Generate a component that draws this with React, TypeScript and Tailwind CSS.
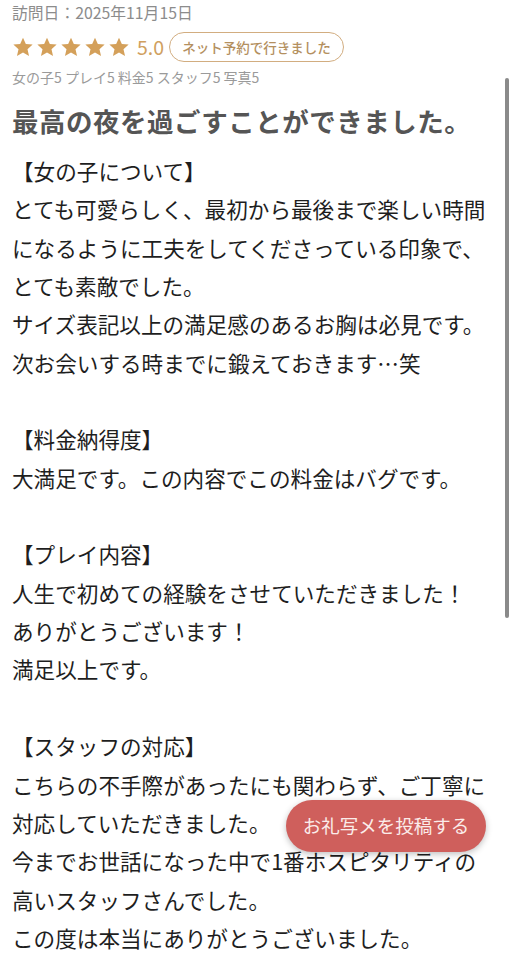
import React from "react";

const lines = [
  "【女の子について】",
  "とても可愛らしく、最初から最後まで楽しい時間",
  "になるように工夫をしてくださっている印象で、",
  "とても素敵でした。",
  "サイズ表記以上の満足感のあるお胸は必見です。",
  "次お会いする時までに鍛えておきます…笑",
  "",
  "【料金納得度】",
  "大満足です。この内容でこの料金はバグです。",
  "",
  "【プレイ内容】",
  "人生で初めての経験をさせていただきました！",
  "ありがとうございます！",
  "満足以上です。",
  "",
  "【スタッフの対応】",
  "こちらの不手際があったにも関わらず、ご丁寧に",
  "対応していただきました。",
  "今までお世話になった中で1番ホスピタリティの",
  "高いスタッフさんでした。",
  "この度は本当にありがとうございました。",
];

function Star() {
  return (
    <svg width="22" height="22" viewBox="0 0 24 24" className="shrink-0">
      <path
        d="M12 1.8l3.1 6.9 7.4.7-5.6 5 1.7 7.4L12 17.9l-6.6 3.9 1.7-7.4-5.6-5 7.4-.7z"
        fill="#d4a05a"
      />
    </svg>
  );
}

export default function App() {
  return (
    <div className="relative w-[513px] h-[960px] overflow-hidden bg-white font-['Noto_Sans_CJK_JP','Noto_Sans',sans-serif]">
      <div className="px-[12px]">
        <div className="pt-[2px] text-[15.8px] leading-[22px] text-[#8c8c8c]">
          訪問日：2025年11月15日
        </div>
        <div className="mt-[8px] flex items-center h-[30px]">
          <div className="flex gap-[2px]">
            <Star />
            <Star />
            <Star />
            <Star />
            <Star />
          </div>
          <span className="ml-[7px] text-[19.5px] leading-none text-[#d0a060]">5.0</span>
          <span className="ml-[5px] flex h-[30px] w-[175px] items-center justify-center rounded-full border-[1.5px] border-[#d2ad80] text-[13.5px] font-medium text-[#b4905f]">
            ネット予約で行きました
          </span>
        </div>
        <div className="mt-[4px] text-[14px] leading-[22px] text-[#9a9a9a]">
          女の子5 プレイ5 料金5 スタッフ5 写真5
        </div>
        <div className="mt-[15px] text-[26.5px] font-bold leading-[36px] tracking-[0.5px] text-[#555]">
          最高の夜を過ごすことができました。
        </div>
        <div className="mt-[13px] text-[21.6px] leading-[38.35px] text-[#1e1e1e]">
          {lines.map((l, i) => (
            <div key={i} className="whitespace-nowrap">
              {l === "" ? "\u00a0" : l}
            </div>
          ))}
        </div>
      </div>
      <div className="absolute left-[286px] top-[800px] flex h-[52px] w-[200px] items-center justify-center rounded-full bg-[#cf5f5c] text-[18.5px] text-[#fbecea] shadow-[0_2px_6px_rgba(0,0,0,0.25)]">
        お礼写メを投稿する
      </div>
      <div className="absolute left-[505px] top-[78px] h-[540px] w-[3.5px] rounded-full bg-[#8a8a8a]" />
    </div>
  );
}
